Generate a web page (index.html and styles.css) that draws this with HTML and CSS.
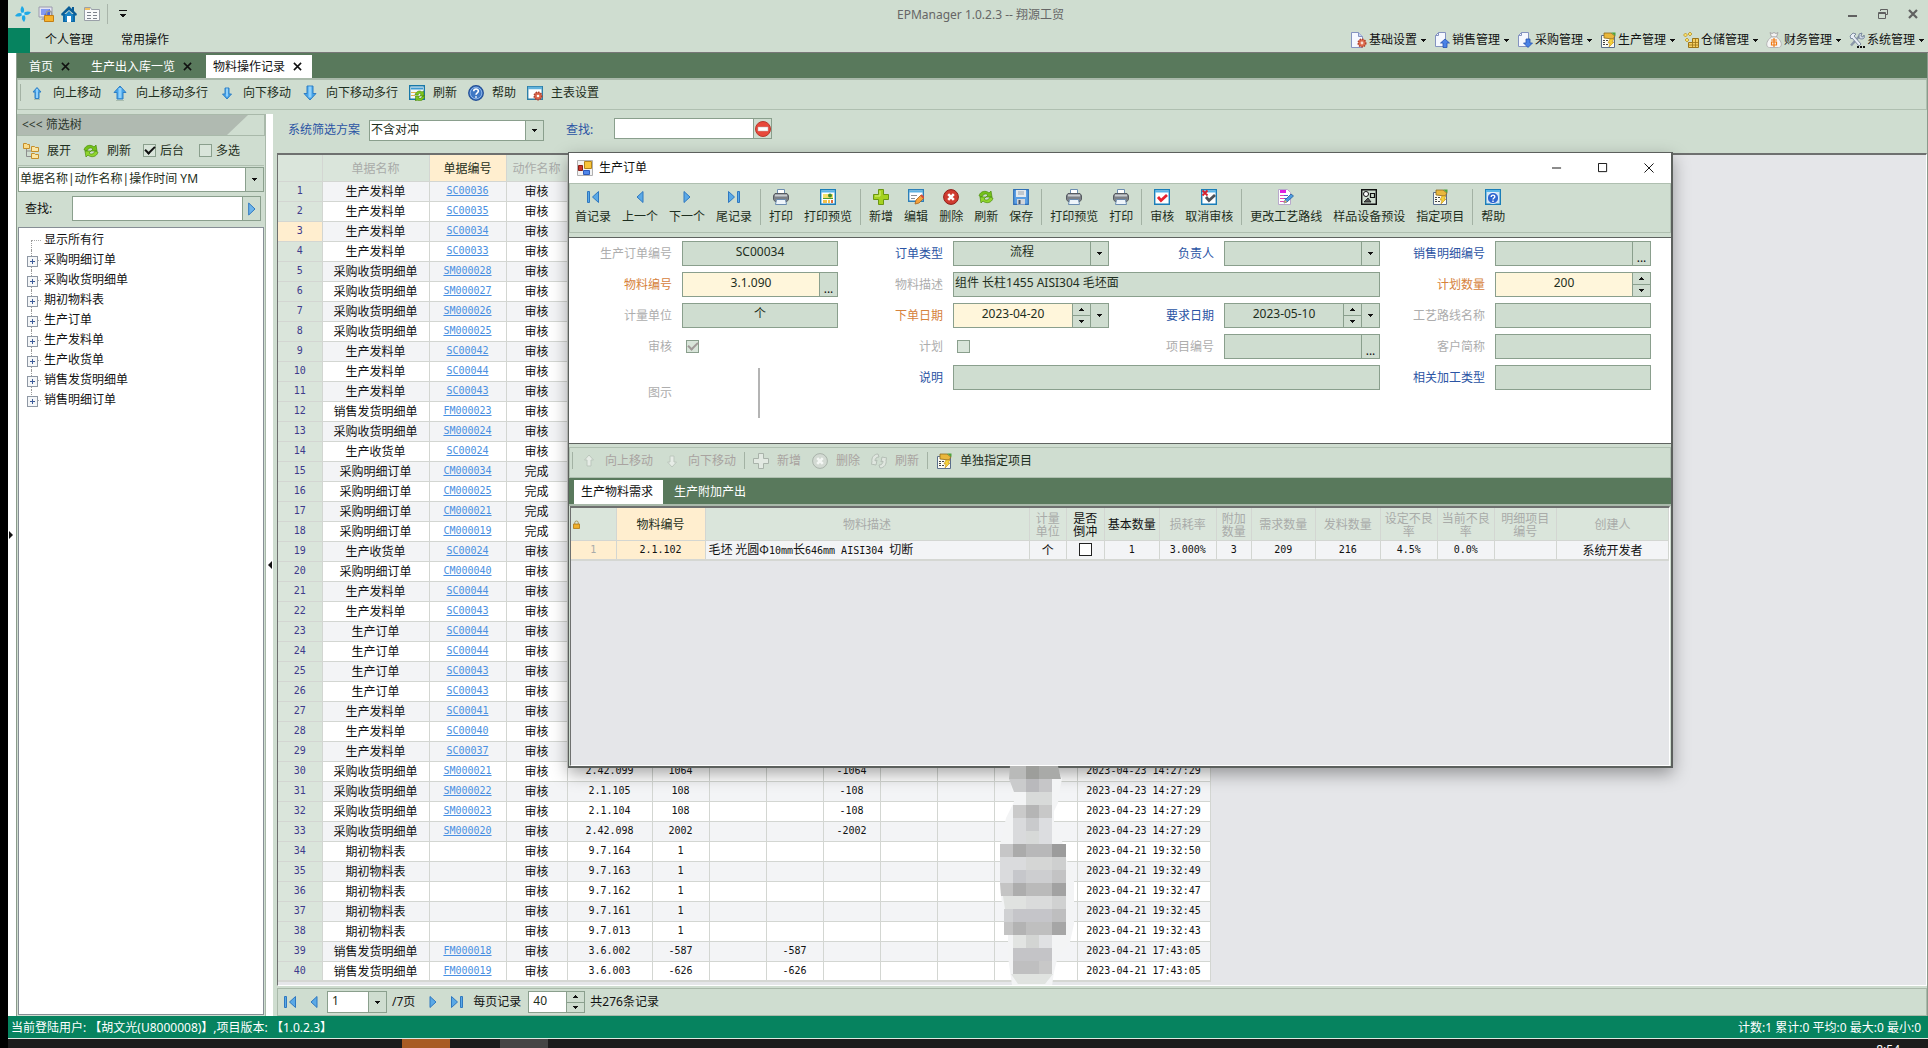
FILE: index.html
```html
<!DOCTYPE html>
<html lang="zh-CN">
<head>
  <meta charset="UTF-8">
  <meta name="viewport" content="width=device-width, initial-scale=1.0">
  <title>EPManager 1.0.2.3 -- 翔源工贸</title>
  <link rel="stylesheet" href="styles.css">
</head>
<body>
  <!-- icon sprite -->
  <svg class="sprite" aria-hidden="true">
    <symbol id="i-drop" viewBox="0 0 7 7"><path d="M1 2h5v1h-1v1h-1v1h-1v-1h-1v-1h-1z" fill="currentColor"/></symbol>
    <symbol id="i-upTri" viewBox="0 0 7 7"><path d="M1 5h5v-1h-1v-1h-1v-1h-1v1h-1v1h-1z" fill="currentColor"/></symbol>
    <symbol id="i-x" viewBox="0 0 10 10"><path d="M1 1l8 8M9 1l-8 8" stroke="currentColor" stroke-width="1.7"/></symbol>
    <symbol id="i-app" viewBox="0 0 16 16"><g fill="#1fa9e6"><path d="M8 8C5 6 5 3 7 0c2 2 3 4 1 8z"/><path d="M8 8c2-3 5-3 8-2-2 3-4 4-8 2z"/><path d="M8 8c3 2 3 5 1 8-2-2-3-4-1-8z"/><path d="M8 8c-2 3-5 3-8 2 2-3 4-4 8-2z"/></g><circle cx="8" cy="8" r="1.5" fill="#bff0ff"/></symbol>
    <symbol id="i-lock" viewBox="0 0 16 16"><path d="M1 1h13v10H1z" fill="#e4e4f2" stroke="#9a9aac"/><path d="M3 3h9v6H3z" fill="#4a65dd"/><path d="M3 3h9l-6 6H3z" fill="#8299f2"/><path d="M3 14l2-3h3v3z" fill="#a9a9b4"/><path d="M8.500 9V7.500a2.500 2.500 0 0 1 5 0V9" fill="none" stroke="#999" stroke-width="1.500"/><path d="M6.500 9.500h9v6h-9z" fill="#f6b32c" stroke="#c47f14"/></symbol>
    <symbol id="i-home" viewBox="0 0 16 16"><path d="M2 8h12v8H2z" fill="#0d6aa8"/><path d="M8 0L0 8l1 2 7-6 7 6 1-2-3-3V1h-2v2z" fill="#0a5d97"/><path d="M8 5l4 4v6H4V9z" fill="#1b84c6"/><path d="M6 10h4v6H6z" fill="#fff"/></symbol>
    <symbol id="i-form" viewBox="0 0 16 16"><path d="M.5 1.500h6l1 2h8v11H.5z" fill="#f8f9fb" stroke="#9aa0a8"/><path d="M1 2h5v2H1z" fill="#f2c162"/><path d="M3 6.500h4M9 6.500h4M3 9.500h4M9 9.500h4M3 12.500h4M9 12.500h4" stroke="#7c828c"/></symbol>
    <symbol id="i-up" viewBox="0 0 16 16"><path d="M8 2.500l4 4.500H10v6.500H6V7H4z" fill="#45a3ea" stroke="#2f7fc4"/><path d="M8 4v9" stroke="#8fd0fb" stroke-width="2"/><path d="M5 14.500h6" stroke="#a9bcae"/></symbol>
    <symbol id="i-upBig" viewBox="0 0 16 16"><path d="M8 1l6 6.500H11V14H5V7.500H2z" fill="#45a3ea" stroke="#2f7fc4"/><path d="M8 3v10" stroke="#8fd0fb" stroke-width="3"/><path d="M4 15.500h8" stroke="#a9bcae"/></symbol>
    <symbol id="i-down" viewBox="0 0 16 16"><path d="M8 14l4.500-5H10V3H6v6H3.500z" fill="#45a3ea" stroke="#2f7fc4"/><path d="M8 3.500v8" stroke="#8fd0fb" stroke-width="2"/></symbol>
    <symbol id="i-downBig" viewBox="0 0 16 16"><path d="M8 15l6-6.500H11V1H5v7.500H2z" fill="#45a3ea" stroke="#2f7fc4"/><path d="M8 1.500v11" stroke="#8fd0fb" stroke-width="3"/></symbol>
    <symbol id="i-arrows" viewBox="0 0 16 16"><path d="M1 7c1-5 7-6 10-3l2-2 1 6H8l2-2C8 4 5 5 4 8z" fill="#74c11a" stroke="#4a8c0c" stroke-width=".7"/><path d="M15 9c-1 5-7 6-10 3l-2 2-1-6h6l-2 2c2 2 5 1 6-2z" fill="#8fd52c" stroke="#4a8c0c" stroke-width=".7"/></symbol>
    <symbol id="i-tableRefresh" viewBox="0 0 16 16"><path d="M.7.7h14.600v13.600H.7z" fill="#f4f8fa" stroke="#1878a8" stroke-width="1.400"/><path d="M2 3.500h12" stroke="#3f9ad0" stroke-width="2"/><path d="M2 7.500h5M2 10.500h4" stroke="#e2b34c"/><path d="M6 10c1-4 5-5 7-3l1.500-1 .5 5h-4l1-2c-1-1-2-1-3 1zM16 11c-1 4-5 6-8 4l-1.500 1V11h4l-1 2c2 1 3 0 4-2z" fill="#7fc61c" stroke="#3f800c" stroke-width=".6"/></symbol>
    <symbol id="i-help" viewBox="0 0 16 16"><circle cx="8" cy="8" r="7.300" fill="#3f78c4" stroke="#234f96" stroke-width="1.200"/><circle cx="8" cy="8" r="5.800" fill="none" stroke="#9dc0ee" stroke-width=".8"/><path d="M5.700 6.300c0-3 4.800-3 4.700-.2C10.400 8 8 7.800 8 9.800M8 11.200v1.600" fill="none" stroke="#fff" stroke-width="1.600"/></symbol>
    <symbol id="i-tableGear" viewBox="0 0 16 16"><path d="M.7 1.700h14.600v12.600H.7z" fill="#fff" stroke="#2d7fa8" stroke-width="1.400"/><path d="M1 3h14" stroke="#62b2dc" stroke-width="2.500"/><circle cx="11" cy="11" r="3.800" fill="#d9644a" stroke="#b0402c" stroke-width="1.500" stroke-dasharray="1.500 1"/><circle cx="11" cy="11" r="1.300" fill="#fff"/></symbol>
    <symbol id="i-tree" viewBox="0 0 16 16"><path d="M3.500 6v7.500H9M3.500 8H9" fill="none" stroke="#8d8d8d"/><path d="M.5.500h3l1 1h2v4h-6z" fill="#fbdd8a" stroke="#c58e2a"/><path d="M8.500 3.500h3l1 1h3v4h-7zM8.500 10.500h3l1 1h3v4h-7z" fill="#fbe6a4" stroke="#c58e2a"/></symbol>
    <symbol id="i-play" viewBox="0 0 8 14"><path d="M.7 1v12l6.300-6z" fill="#6eb4ea" stroke="#2f78c0"/></symbol>
    <symbol id="i-stop" viewBox="0 0 16 16"><circle cx="8" cy="8" r="7.500" fill="#e8483a" stroke="#b8382c"/><path d="M3 6h10v4H3z" fill="#fff" stroke="#b8b0b0" stroke-width=".5"/></symbol>
    <symbol id="i-first" viewBox="0 0 16 16"><path d="M2.500 2.500h2v11h-2zM13.500 2.500v11L7.500 8z" fill="#5ba9e6" stroke="#2f78c0"/></symbol>
    <symbol id="i-prev" viewBox="0 0 16 16"><path d="M11 2.500v11L5 8z" fill="#5ba9e6" stroke="#2f78c0"/></symbol>
    <symbol id="i-next" viewBox="0 0 16 16"><path d="M5 2.500v11L11 8z" fill="#5ba9e6" stroke="#2f78c0"/></symbol>
    <symbol id="i-last" viewBox="0 0 16 16"><path d="M11.500 2.500h2v11h-2zM2.500 2.500v11l6-5.500z" fill="#5ba9e6" stroke="#2f78c0"/></symbol>
    <symbol id="i-print" viewBox="0 0 16 16"><path d="M4.500.5h7v5h-7z" fill="#fff" stroke="#6b8cb0"/><path d="M2 4.500h12l1.500 2v4l-1.500 2H2l-1.500-2v-4z" fill="#7c8086" stroke="#565a60"/><path d="M2 6.500h12" stroke="#c8ccd0" stroke-width="2"/><path d="M3.500 10.500h9l1 5h-11z" fill="#eef4fa" stroke="#6b8cb0"/></symbol>
    <symbol id="i-preview" viewBox="0 0 16 16"><path d="M.7.7h14.600v14.600H.7z" fill="#fff" stroke="#1a7db8" stroke-width="1.400"/><path d="M1 2.500h14" stroke="#58b4e8" stroke-width="2"/><path d="M3 5h10v4H3z" fill="#f3e06a"/><circle cx="10" cy="6.500" r="2" fill="#3c8a34"/><path d="M3 9.500h10" stroke="#4f9a34"/><path d="M3 11h4v3H3zM8 11h2v3H8z" fill="#f3c04a"/><path d="M11 11h2v3h-2z" fill="#e06d3a"/></symbol>
    <symbol id="i-plus" viewBox="0 0 16 16"><path d="M5.500.5h5v5h5v5h-5v5h-5v-5h-5v-5h5z" fill="#a4d21f" stroke="#6a9612"/><path d="M7 2v5H2" fill="none" stroke="#d8f07c"/></symbol>
    <symbol id="i-edit" viewBox="0 0 16 16"><path d="M.7.7h14.600v11.600H.7z" fill="#fff" stroke="#2d7fb8" stroke-width="1.400"/><path d="M1 2.500h14" stroke="#5cb2e2" stroke-width="2"/><path d="M3 6.500h6M3 9.500h4" stroke="#8a8f96"/><path d="M7 15l1-4 5-5 3 3-5 5z" fill="#f5a33c" stroke="#a8621a" stroke-width=".8"/><path d="M13 6l3 3" stroke="#d24b3c" stroke-width="2"/></symbol>
    <symbol id="i-del" viewBox="0 0 16 16"><circle cx="8" cy="8" r="7.400" fill="#cf3b30" stroke="#8f1f1a"/><path d="M5.200 5.200l5.600 5.600M10.800 5.200l-5.600 5.600" stroke="#fff" stroke-width="2.600"/></symbol>
    <symbol id="i-save" viewBox="0 0 16 16"><path d="M.7.7h14.600v14.600H.7z" fill="#5b9fe4" stroke="#2f6db4" stroke-width="1.200"/><path d="M3 1h10v7H3z" fill="#e6eaee"/><path d="M5 3h6M5 5h6" stroke="#9aa4ae"/><path d="M4 10h8v5.500H4z" fill="#d3d7dc"/><path d="M5.500 11h2v4h-2z" fill="#4c5664"/></symbol>
    <symbol id="i-check" viewBox="0 0 16 16"><path d="M.7.7h14.600v14.600H.7z" fill="#fff" stroke="#1a7db8" stroke-width="1.400"/><path d="M1 2.500h14" stroke="#58b4e8" stroke-width="2"/><path d="M4 8l3 3.500L13 6" fill="none" stroke="#e8222e" stroke-width="2.800"/></symbol>
    <symbol id="i-uncheck" viewBox="0 0 16 16"><path d="M.7.7h14.600v14.600H.7z" fill="#fff" stroke="#1a7db8" stroke-width="1.400"/><path d="M1 2.500h14" stroke="#58b4e8" stroke-width="2"/><path d="M5 8l3 3.500L14 6" fill="none" stroke="#4e5258" stroke-width="2.800"/><path d="M1.500 1.500l5 5M6.500 1.500l-5 5" stroke="#d8202c" stroke-width="1.800"/></symbol>
    <symbol id="i-route" viewBox="0 0 16 16"><path d="M.5.5h9l3 3v12H.5z" fill="#fff" stroke="#b9a9cc"/><path d="M2 2.500h6" stroke="#e020e0" stroke-width="3"/><path d="M2 6.500h4M2 9.500h4M2 12.500h4" stroke="#e04ab0"/><path d="M6 6.500h4M6 9.500h3" stroke="#4a6bd0"/><path d="M6 14l1-3 6-6 2.500 2-6.500 6z" fill="#4b9be0" stroke="#2a5f9c" stroke-width=".8"/><path d="M6 14l1-3 2 2z" fill="#f1b560"/></symbol>
    <symbol id="i-device" viewBox="0 0 16 16"><path d="M.7.7h14.600v14.600H.7z" fill="none" stroke="#111" stroke-width="1.400"/><circle cx="5" cy="5" r="2.500" fill="#fff" stroke="#111"/><path d="M9.500 4.500h4v4h-4z" fill="none" stroke="#111" stroke-width="1.200"/><path d="M3 13l4-4 3 4z" fill="#555" stroke="#111" stroke-width=".8"/></symbol>
    <symbol id="i-assign" viewBox="0 0 16 16"><path d="M1.500 3.500h13v12h-13z" fill="#fbfbf4" stroke="#5b6f8c"/><path d="M4 1h7l4 3-2 3-9-1z" fill="#e9b73c" stroke="#8d6a1e" stroke-width=".8"/><path d="M11 .5h4.500V4z" fill="#4fa43a"/><path d="M3 8.500h2M3 10.500h2M3 12.500h2M6 8.500h2M6 12.500h2" stroke="#444"/><path d="M10 7l4 0-2 3h2l-5 5 1-4H8z" fill="#f6d33a" stroke="#c08c14" stroke-width=".6"/></symbol>
    <symbol id="i-helpBox" viewBox="0 0 16 16"><path d="M.7.7h14.600v14.600H.7z" fill="#cfe6f6" stroke="#1a7db8" stroke-width="1.400"/><path d="M1 2h14" stroke="#58b4e8" stroke-width="2"/><circle cx="8" cy="9" r="5.600" fill="#2f66d0" stroke="#fff" stroke-width=".8"/><path d="M6.200 8c0-2.600 3.700-2.400 3.600-.2C9.800 9 8 9 8 10.500M8 11.500v1.400" fill="none" stroke="#fff" stroke-width="1.400"/></symbol>
    <symbol id="i-setting" viewBox="0 0 16 16"><path d="M.5.5h7l4 4v11H.5z" fill="#f5f8ff" stroke="#8493c0"/><path d="M7.500.5v4h4" fill="#c4d0ee" stroke="#8493c0"/><circle cx="11" cy="11" r="3.800" fill="#dd6a4c" stroke="#b0402c" stroke-width="1.500" stroke-dasharray="1.500 1"/><circle cx="11" cy="11" r="1.400" fill="#f7dcd4"/></symbol>
    <symbol id="i-sale" viewBox="0 0 16 16"><path d="M4.500.5h7v14H1.500v-11z" fill="#f5f8ff" stroke="#8493c0"/><path d="M4.500.5v3h-3" fill="none" stroke="#8493c0"/><path d="M11 7l4.500 4H13v4.500H9V11H6.500z" fill="#4a82e6" stroke="#2450b0" stroke-width=".8"/></symbol>
    <symbol id="i-buy" viewBox="0 0 16 16"><path d="M4.500.5h7v14H1.500v-11z" fill="#f5f8ff" stroke="#8493c0"/><path d="M4.500.5v3h-3" fill="none" stroke="#8493c0"/><path d="M11 15.500l4.500-4.500H13V7H9v4H6.500z" fill="#4a82e6" stroke="#2450b0" stroke-width=".8"/></symbol>
    <symbol id="i-store" viewBox="0 0 16 16"><path d="M2.500 1l2 2-2 2-2-2zM7 0l2 2-2 2-2-2zM4 6l2 2-2 2-2-2z" fill="#fbe06a" stroke="#b08a1c" stroke-width=".7"/><path d="M9.500 6.500h6v9h-10v-5h4z" fill="#f6cf62" stroke="#9a7418"/><path d="M9.500 10.500h6M12.500 6.500v9M9.500 10.500v5M6 13h9" fill="none" stroke="#9a7418" stroke-width=".8"/></symbol>
    <symbol id="i-money" viewBox="0 0 16 16"><path d="M4 .5l2 1 2-1 2 1 2-1L10.500 5h-5z" fill="#f3f3f3" stroke="#a8a8a8"/><path d="M5.500 5h5c6 4 6 10.500 2 10.500h-9C-.5 15.500-.5 9 5.500 5z" fill="#f6f6f6" stroke="#b4b4b4"/><path d="M8 6v9M5 8h6M5.500 10h5v3h-5z" fill="none" stroke="#f07a14" stroke-width="1.200"/></symbol>
    <symbol id="i-tools" viewBox="0 0 16 16"><path d="M2 13.500l9-10" stroke="#8a97a8" stroke-width="2.500"/><path d="M1 4l3-3 3 1-2 2 7 8-2 2-7-8-1 1z" fill="#e8eef6" stroke="#6a7890" stroke-width=".8"/><path d="M10 2l3-1-1 3 2 1 1-2c2 4-3 5-5 3z" fill="#cfd9e6" stroke="#6a7890" stroke-width=".8"/><path d="M8 15h2M11 15h2M14 15h2" stroke="#111" stroke-width="2"/></symbol>
    <symbol id="i-win" viewBox="0 0 16 16"><path d="M.5.5h15v15H.5z" fill="#f2f2f2" stroke="#b0b0b0"/><path d="M7.500 1.500h7v7h-7z" fill="#f8c53a" stroke="#b4841a"/><path d="M1.500 5.500h4v5h-4z" fill="#c9352a" stroke="#8a1d18"/><path d="M6.500 10.500h6v4h-6z" fill="#4f86ea" stroke="#2c5ab8"/></symbol>
    <symbol id="i-padlock" viewBox="0 0 8 10"><path d="M2 5V3a2 2 0 0 1 4 0v2" fill="none" stroke="#a08a4a"/><path d="M.5 4.500h7v5h-7z" fill="#f0b02c" stroke="#b27a12"/></symbol>
    <symbol id="i-gUp" viewBox="0 0 16 16"><path d="M8 2l4.500 5H10v6H6V7H3.500z" fill="#e6ece6" stroke="#bcc7bd"/></symbol>
    <symbol id="i-gDown" viewBox="0 0 16 16"><path d="M8 14l4.500-5H10V3H6v6H3.500z" fill="#e6ece6" stroke="#bcc7bd"/></symbol>
    <symbol id="i-gPlus" viewBox="0 0 16 16"><path d="M5.500.5h5v5h5v5h-5v5h-5v-5h-5v-5h5z" fill="#e2e9e2" stroke="#a9b3aa"/></symbol>
    <symbol id="i-gDel" viewBox="0 0 16 16"><circle cx="8" cy="8" r="7.400" fill="#d3dad3" stroke="#a9b3aa"/><path d="M5.200 5.200l5.600 5.600M10.800 5.200l-5.600 5.600" stroke="#f4f7f4" stroke-width="2.600"/></symbol>
    <symbol id="i-gArrows" viewBox="0 0 16 16"><path d="M7 1C3 1 0 5 1 9l-1 2 5 1 1-5-2 1c0-2 1-4 4-4zM9 15c4 0 7-4 6-8l1-2-5-1-1 5 2-1c0 2-1 4-4 4z" fill="#dfe6df" stroke="#b0bab1" stroke-width=".9"/></symbol>
  </svg>

  <div class="screen">
    <header class="titlebar">
      <div class="quick">
        <svg class="ico"><use href="#i-app"/></svg>
        <button type="button" aria-label="锁定"><svg class="ico"><use href="#i-lock"/></svg></button>
        <button type="button" aria-label="首页"><svg class="ico"><use href="#i-home"/></svg></button>
        <button type="button" aria-label="窗口"><svg class="ico"><use href="#i-form"/></svg></button>
        <span class="quick-sep"></span>
        <button type="button" aria-label="更多"><svg class="more" viewBox="0 0 8 8"><path d="M0 0h8v1H0zM1 4h6v1h-1v1h-1v1h-2v-1h-1v-1h-1z" fill="#111"/></svg></button>
      </div>
      <h1>EPManager 1.0.2.3 -- 翔源工贸</h1>
      <div class="win-ctl">
        <button type="button" aria-label="最小化"><svg viewBox="0 0 10 10"><path d="M0 6h9v2H0z" fill="#606060"/></svg></button>
        <button type="button" aria-label="还原"><svg viewBox="0 0 10 10"><path d="M2.500 2V.5h7v5H8M.5 3.500h7v6h-7zM.5 4.500h7" fill="none" stroke="#606060"/></svg></button>
        <button type="button" aria-label="关闭"><svg viewBox="0 0 10 10"><path d="M1 1l8 8M9 1l-8 8" stroke="#606060" stroke-width="2.200"/></svg></button>
      </div>
    </header>

    <nav class="menubar">
      <span class="file-btn"></span>
      <a href="#">个人管理</a>
      <a href="#">常用操作</a>
      <div class="modules">
        <button type="button"><svg class="ico"><use href="#i-setting"/></svg>基础设置<svg class="tri"><use href="#i-drop"/></svg></button>
        <button type="button"><svg class="ico"><use href="#i-sale"/></svg>销售管理<svg class="tri"><use href="#i-drop"/></svg></button>
        <button type="button"><svg class="ico"><use href="#i-buy"/></svg>采购管理<svg class="tri"><use href="#i-drop"/></svg></button>
        <button type="button"><svg class="ico"><use href="#i-assign"/></svg>生产管理<svg class="tri"><use href="#i-drop"/></svg></button>
        <button type="button"><svg class="ico"><use href="#i-store"/></svg>仓储管理<svg class="tri"><use href="#i-drop"/></svg></button>
        <button type="button"><svg class="ico"><use href="#i-money"/></svg>财务管理<svg class="tri"><use href="#i-drop"/></svg></button>
        <button type="button"><svg class="ico"><use href="#i-tools"/></svg>系统管理<svg class="tri"><use href="#i-drop"/></svg></button>
      </div>
    </nav>

    <div class="shell">
      <div class="edge"><span class="fold fold-right"></span></div>
      <main class="workspace">
        <div class="tabs">
          <button type="button" class="tab">首页<svg class="x"><use href="#i-x"/></svg></button>
          <button type="button" class="tab">生产出入库一览<svg class="x"><use href="#i-x"/></svg></button>
          <button type="button" class="tab active">物料操作记录<svg class="x"><use href="#i-x"/></svg></button>
        </div>
        <div class="toolbar main-toolbar">
          <span class="sep"></span>
          <button type="button"><svg class="ico"><use href="#i-up"/></svg>向上移动</button>
          <button type="button"><svg class="ico"><use href="#i-upBig"/></svg>向上移动多行</button>
          <button type="button"><svg class="ico"><use href="#i-down"/></svg>向下移动</button>
          <button type="button"><svg class="ico"><use href="#i-downBig"/></svg>向下移动多行</button>
          <button type="button"><svg class="ico"><use href="#i-tableRefresh"/></svg>刷新</button>
          <button type="button"><svg class="ico"><use href="#i-help"/></svg>帮助</button>
          <button type="button"><svg class="ico"><use href="#i-tableGear"/></svg>主表设置</button>
        </div>

        <div class="panes">
          <aside class="filter">
            <div class="filter-head"><span>&lt;&lt;&lt; 筛选树</span></div>
            <div class="filter-tools">
              <button type="button"><svg class="ico"><use href="#i-tree"/></svg>展开</button>
              <button type="button"><svg class="ico"><use href="#i-arrows"/></svg>刷新</button>
              <label><input type="checkbox" class="tick" checked>后台</label>
              <label><input type="checkbox" class="tick">多选</label>
            </div>
            <div class="field group-by">
              <select aria-label="分组"><option>单据名称|动作名称|操作时间 YM</option></select>
              <span class="part"><svg class="tri"><use href="#i-drop"/></svg></span>
            </div>
            <div class="filter-find">
              <label for="treeFind">查找:</label>
              <div class="field">
                <input type="text" id="treeFind">
                <button type="button" class="part" aria-label="下一个"><svg class="play"><use href="#i-play"/></svg></button>
              </div>
            </div>
            <ul class="tree">
              <li class="leaf">显示所有行</li>
              <li>采购明细订单</li>
              <li>采购收货明细单</li>
              <li>期初物料表</li>
              <li>生产订单</li>
              <li>生产发料单</li>
              <li>生产收货单</li>
              <li>销售发货明细单</li>
              <li>销售明细订单</li>
            </ul>
          </aside>
          <div class="splitter"><span class="fold fold-left"></span></div>

          <section class="records">
            <div class="scheme">
              <label for="scheme">系统筛选方案</label>
              <div class="field scheme-field">
                <select id="scheme"><option>不含对冲</option></select>
                <span class="part"><svg class="tri"><use href="#i-drop"/></svg></span>
              </div>
              <label for="find" class="find-label">查找:</label>
              <div class="field find-field">
                <input type="text" id="find">
                <button type="button" class="part" aria-label="清除"><svg class="ico"><use href="#i-stop"/></svg></button>
              </div>
            </div>
            <div class="grid-box">
              <table class="grid">
                <colgroup>
                  <col class="w44"><col class="w107"><col class="w77"><col class="w61"><col class="w85">
                  <col class="w57"><col class="w57"><col class="w57"><col class="w57"><col class="w57"><col class="w57">
                  <col class="w83"><col class="w133">
                </colgroup>
                <thead>
                  <tr><th></th><th>单据名称</th><th class="key">单据编号</th><th>动作名称</th><th></th><th></th><th></th><th></th><th></th><th></th><th></th><th></th><th></th></tr>
                </thead>
                <tbody id="rows"></tbody>
              </table>
              <!-- masked operator names -->
              <svg class="mask" viewBox="0 0 76 220" aria-hidden="true">
                <path d="M14 1h42l6 13-3 14-1 10-4 8v16l8 14 4 18 8 15v50l-4 18-12 14-4 16-2 14-6 13H16l-4-14-4-28V160L2 140 0 118V80l6-27 8-16-4-22z" fill="#f3f4f5"/>
                <path d="M10 1h16v13H9z" fill="#b9bab9"/><path d="M26 1h13v13H26z" fill="#9d9e9b"/><path d="M39 1h19l3 13H39z" fill="#a9aaa8"/>
                <path d="M9 14h17v13H14z" fill="#cacbcc"/><path d="M26 14h13v13H26z" fill="#b9b9bc"/><path d="M39 14h13v13H39z" fill="#c6c6c8"/>
                <path d="M26 27h26v13H26z" fill="#d8dad9"/><path d="M13 40h13v13H13z" fill="#cacaca"/><path d="M26 40h13v13H26z" fill="#b5b5b5"/><path d="M39 40h13v13H39z" fill="#c8c8c8"/>
                <path d="M13 53h13v26H13z" fill="#d9dadc"/><path d="M26 53h13v13H26z" fill="#c9cacc"/><path d="M39 53h13v26H39z" fill="#dcdde0"/><path d="M26 66h13v13H26z" fill="#d7d9d8"/>
                <path d="M0 79h13v13H0z" fill="#c6c6c7"/><path d="M13 79h13v13H13z" fill="#ababab"/><path d="M26 79h26v13H26z" fill="#b8b8b9"/><path d="M52 79h14v13H52z" fill="#9c9c9c"/>
                <path d="M0 92h26v26H0z" fill="#dadbdd"/><path d="M26 92h26v13H26z" fill="#d5d6d5"/><path d="M52 92h14v13H52z" fill="#cecfcf"/>
                <path d="M13 105h13v13H13z" fill="#c6c7cb"/><path d="M26 105h26v13H26z" fill="#cdced0"/><path d="M52 105h14v13H52z" fill="#c3c3c4"/>
                <path d="M0 118h13v13H1z" fill="#c4c4c4"/><path d="M13 118h13v13H13z" fill="#adadad"/><path d="M26 118h26v13H26z" fill="#bababa"/><path d="M52 118h14v13H52z" fill="#a2a2a2"/>
                <path d="M3 131h23v13H5z" fill="#e0e2e0"/><path d="M26 131h26v13H26z" fill="#dadbdb"/><path d="M52 131h14v13H52z" fill="#d0d1d1"/>
                <path d="M4 144h9v13H4z" fill="#d0d1d3"/><path d="M13 144h39v13H13z" fill="#c5c5c9"/><path d="M52 144h14v13H52z" fill="#bebebf"/>
                <path d="M4 157h9v13H4z" fill="#c4c4c4"/><path d="M13 157h13v13H13z" fill="#b3b3b3"/><path d="M26 157h26v13H26z" fill="#bfbfbf"/><path d="M52 157h14v13H52z" fill="#a6a6a6"/>
                <path d="M13 170h13v13H13z" fill="#e2e4e2"/><path d="M26 170h13v13H26z" fill="#d3d5d3"/><path d="M39 170h13v13H39z" fill="#e0e1e3"/>
                <path d="M13 183h39v13H13z" fill="#c4c4c7"/><path d="M13 196h26v13H13z" fill="#bfbfc0"/><path d="M39 196h13v13H39z" fill="#c8c8c8"/><path d="M11 209h42l-8 10H18z" fill="#e0e3e0"/>
              </svg>
            </div>
            <div class="pager">
              <button type="button" aria-label="首页"><svg class="ico"><use href="#i-first"/></svg></button>
              <button type="button" aria-label="上一页"><svg class="ico"><use href="#i-prev"/></svg></button>
              <div class="field page-field">
                <select aria-label="页码"><option>1</option></select>
                <span class="part"><svg class="tri"><use href="#i-drop"/></svg></span>
              </div>
              <span class="pages">/7页</span>
              <button type="button" aria-label="下一页"><svg class="ico"><use href="#i-next"/></svg></button>
              <button type="button" aria-label="末页"><svg class="ico"><use href="#i-last"/></svg></button>
              <label for="pageSize">每页记录</label>
              <div class="field size-field">
                <input type="text" id="pageSize" value="40">
                <span class="spin"><button type="button" aria-label="加"><svg class="tri"><use href="#i-upTri"/></svg></button><button type="button" aria-label="减"><svg class="tri"><use href="#i-drop"/></svg></button></span>
              </div>
              <span class="total">共276条记录</span>
            </div>
          </section>
        </div>
      </main>
    </div>

    <footer class="status">
      <span>当前登陆用户: 【胡文光(U8000008)】,项目版本: 【1.0.2.3】</span>
      <span>计数:1 累计:0 平均:0 最大:0 最小:0</span>
    </footer>
    <div class="taskbar"><span class="task task-hot"></span><span class="task"></span><span class="clock">8:54</span></div>
  </div>

  <!-- order window -->
  <section class="dialog" role="dialog" aria-labelledby="dlgTitle">
    <div class="dlg-title">
      <svg class="ico"><use href="#i-win"/></svg>
      <h2 id="dlgTitle">生产订单</h2>
      <div class="dlg-ctl">
        <button type="button" aria-label="最小化"><svg viewBox="0 0 11 11"><path d="M0 5.500h10" stroke="#000"/></svg></button>
        <button type="button" aria-label="最大化"><svg viewBox="0 0 11 11"><path d="M.5.500h9v9h-9z" fill="none" stroke="#000"/></svg></button>
        <button type="button" aria-label="关闭"><svg viewBox="0 0 11 11"><path d="M.5.500l10 10M10.500.500l-10 10" stroke="#000"/></svg></button>
      </div>
    </div>
    <div class="ribbon">
      <button type="button"><svg class="ico"><use href="#i-first"/></svg>首记录</button>
      <button type="button"><svg class="ico"><use href="#i-prev"/></svg>上一个</button>
      <button type="button"><svg class="ico"><use href="#i-next"/></svg>下一个</button>
      <button type="button"><svg class="ico"><use href="#i-last"/></svg>尾记录</button>
      <span class="bar"></span>
      <button type="button"><svg class="ico"><use href="#i-print"/></svg>打印</button>
      <button type="button"><svg class="ico"><use href="#i-preview"/></svg>打印预览</button>
      <span class="bar"></span>
      <button type="button"><svg class="ico"><use href="#i-plus"/></svg>新增</button>
      <button type="button"><svg class="ico"><use href="#i-edit"/></svg>编辑</button>
      <button type="button"><svg class="ico"><use href="#i-del"/></svg>删除</button>
      <button type="button"><svg class="ico"><use href="#i-arrows"/></svg>刷新</button>
      <button type="button"><svg class="ico"><use href="#i-save"/></svg>保存</button>
      <span class="bar"></span>
      <button type="button"><svg class="ico"><use href="#i-print"/></svg>打印预览</button>
      <button type="button"><svg class="ico"><use href="#i-print"/></svg>打印</button>
      <span class="bar"></span>
      <button type="button"><svg class="ico"><use href="#i-check"/></svg>审核</button>
      <button type="button"><svg class="ico"><use href="#i-uncheck"/></svg>取消审核</button>
      <span class="bar"></span>
      <button type="button"><svg class="ico"><use href="#i-route"/></svg>更改工艺路线</button>
      <button type="button"><svg class="ico"><use href="#i-device"/></svg>样品设备预设</button>
      <button type="button"><svg class="ico"><use href="#i-assign"/></svg>指定项目</button>
      <span class="bar"></span>
      <button type="button"><svg class="ico"><use href="#i-helpBox"/></svg>帮助</button>
    </div>

    <form class="order">
      <label for="orderNo" class="off">生产订单编号</label>
      <div class="field"><input type="text" id="orderNo" value="SC00034" readonly></div>
      <label for="orderType">订单类型</label>
      <div class="field"><select id="orderType"><option>流程</option></select><span class="part"><svg class="tri"><use href="#i-drop"/></svg></span></div>
      <label for="owner">负责人</label>
      <div class="field"><select id="owner"><option></option></select><span class="part"><svg class="tri"><use href="#i-drop"/></svg></span></div>
      <label for="saleNo">销售明细编号</label>
      <div class="field"><input type="text" id="saleNo"><button type="button" class="part dots">...</button></div>

      <label for="itemNo" class="must">物料编号</label>
      <div class="field need"><input type="text" id="itemNo" value="3.1.090"><button type="button" class="part dots">...</button></div>
      <label for="itemDesc" class="off">物料描述</label>
      <div class="field wide"><input type="text" id="itemDesc" value="组件 长柱1455 AISI304 毛坯面" readonly></div>
      <label for="qty" class="must">计划数量</label>
      <div class="field need"><input type="text" id="qty" value="200"><span class="spin"><button type="button" aria-label="加"><svg class="tri"><use href="#i-upTri"/></svg></button><button type="button" aria-label="减"><svg class="tri"><use href="#i-drop"/></svg></button></span></div>

      <label for="unit" class="off">计量单位</label>
      <div class="field"><input type="text" id="unit" value="个" readonly></div>
      <label for="orderDate" class="must">下单日期</label>
      <div class="field need"><input type="text" id="orderDate" value="2023-04-20"><span class="spin"><button type="button" aria-label="加"><svg class="tri"><use href="#i-upTri"/></svg></button><button type="button" aria-label="减"><svg class="tri"><use href="#i-drop"/></svg></button></span><button type="button" class="part" aria-label="日历"><svg class="tri"><use href="#i-drop"/></svg></button></div>
      <label for="dueDate">要求日期</label>
      <div class="field"><input type="text" id="dueDate" value="2023-05-10"><span class="spin"><button type="button" aria-label="加"><svg class="tri"><use href="#i-upTri"/></svg></button><button type="button" aria-label="减"><svg class="tri"><use href="#i-drop"/></svg></button></span><button type="button" class="part" aria-label="日历"><svg class="tri"><use href="#i-drop"/></svg></button></div>
      <label for="route" class="off">工艺路线名称</label>
      <div class="field"><input type="text" id="route" readonly></div>

      <label for="audit" class="off">审核</label>
      <div class="tick-cell"><input type="checkbox" id="audit" class="tick" checked disabled></div>
      <label for="plan" class="off">计划</label>
      <div class="tick-cell"><input type="checkbox" id="plan" class="tick" disabled></div>
      <label for="project" class="off">项目编号</label>
      <div class="field"><input type="text" id="project"><button type="button" class="part dots">...</button></div>
      <label for="customer" class="off">客户简称</label>
      <div class="field"><input type="text" id="customer" readonly></div>

      <span class="off figure-label">图示</span>
      <div class="figure"></div>
      <label for="memo">说明</label>
      <div class="field wide"><input type="text" id="memo"></div>
      <label for="process">相关加工类型</label>
      <div class="field"><input type="text" id="process"></div>
    </form>

    <div class="toolbar sub-toolbar">
      <span class="sep"></span>
      <button type="button" disabled><svg class="ico"><use href="#i-gUp"/></svg>向上移动</button>
      <button type="button" disabled><svg class="ico"><use href="#i-gDown"/></svg>向下移动</button>
      <span class="sep"></span>
      <button type="button" disabled><svg class="ico"><use href="#i-gPlus"/></svg>新增</button>
      <button type="button" disabled><svg class="ico"><use href="#i-gDel"/></svg>删除</button>
      <button type="button" disabled><svg class="ico"><use href="#i-gArrows"/></svg>刷新</button>
      <span class="sep"></span>
      <button type="button"><svg class="ico"><use href="#i-assign"/></svg>单独指定项目</button>
    </div>
    <div class="tabs dlg-tabs">
      <button type="button" class="tab active">生产物料需求</button>
      <button type="button" class="tab">生产附加产出</button>
    </div>
    <div class="need-box">
      <table class="grid need-grid">
        <colgroup>
          <col class="w45"><col class="w89"><col class="w324"><col class="w37"><col class="w38"><col class="w55"><col class="w57">
          <col class="w35"><col class="w64"><col class="w65"><col class="w57"><col class="w57"><col class="w62"><col class="w112">
        </colgroup>
        <thead>
          <tr>
            <th class="lock-cell"><svg class="padlock"><use href="#i-padlock"/></svg></th>
            <th class="key">物料编号</th><th>物料描述</th><th>计量<br>单位</th><th class="on">是否<br>倒冲</th>
            <th class="on">基本数量</th><th>损耗率</th><th>附加<br>数量</th><th>需求数量</th><th>发料数量</th>
            <th>设定不良<br>率</th><th>当前不良<br>率</th><th>明细项目<br>编号</th><th>创建人</th>
          </tr>
        </thead>
        <tbody>
          <tr>
            <td class="hot no num">1</td><td class="hot num">2.1.102</td>
            <td class="left">毛坯 光圆Φ<span class="num">10mm</span>长<span class="num">646mm AISI304 </span>切断</td>
            <td>个</td><td><input type="checkbox" class="tick plain" aria-label="是否倒冲"></td><td class="num">1</td><td class="num">3.000%</td>
            <td class="num">3</td><td class="num">209</td><td class="num">216</td><td class="num">4.5%</td><td class="num">0.0%</td><td></td><td>系统开发者</td>
          </tr>
        </tbody>
      </table>
    </div>
  </section>
  <script src="script.js"></script>
</body>
</html>
```
FILE: styles.css
```css
* {
  box-sizing: border-box;
}
body {
  margin: 0;
  background-color: #000;
  color: #111;
  font-family: "Noto Sans", "Noto Sans CJK SC", sans-serif;
  font-size: 12px;
  line-height: 16px;
}
button, input, select {
  font: inherit;
  color: inherit;
  margin: 0;
  padding: 0;
  border: none;
  border-radius: 0;
  background: none;
  appearance: none;
  outline: none;
}
button {
  cursor: pointer;
  white-space: nowrap;
}
a {
  color: inherit;
  text-decoration: none;
}
h1, h2 {
  margin: 0;
  font-size: 12px;
  font-weight: normal;
}
.sprite {
  display: none;
}
.ico {
  width: 16px;
  height: 16px;
  flex: none;
  display: block;
}
.tri {
  width: 7px;
  height: 7px;
  flex: none;
  display: block;
  color: #111;
}

/* frame */
.screen {
  display: flex;
  flex-direction: column;
  height: 100vh;
  padding-left: 8px;
}
.titlebar {
  display: grid;
  grid-template-columns: 1fr auto 1fr;
  align-items: center;
  height: 28px;
  flex: none;
  padding: 0 10px 0 7px;
  background-color: #cfddd0;
}
.titlebar h1 {
  padding: 2px 0 0 28px;
  color: #666;
}
.quick {
  display: flex;
  align-items: center;
  gap: 7px;
}
.quick-sep {
  width: 1px;
  height: 20px;
  background-color: #a9b5aa;
}
.more {
  display: block;
  width: 8px;
  height: 8px;
  margin-left: 4px;
}
.win-ctl {
  display: flex;
  justify-content: flex-end;
  gap: 20px;
}
.win-ctl svg, .dlg-ctl svg {
  display: block;
  width: 10px;
  height: 10px;
}
.menubar {
  display: flex;
  align-items: center;
  height: 25px;
  flex: none;
  background-color: #cfddd0;
  border-bottom: 1px solid #777;
}
.file-btn {
  width: 22px;
  height: 25px;
  background-color: #06835f;
}
.menubar a {
  margin: 0 13px 0 15px;
}
.modules {
  display: flex;
  gap: 7px;
  margin-left: auto;
  padding-right: 3px;
}
.modules button {
  display: flex;
  align-items: center;
  gap: 2px;
}
.modules .tri {
  margin-left: 1px;
}
.shell {
  display: flex;
  flex: 1;
  min-height: 0;
}
.edge {
  width: 8px;
  background-color: #fff;
  display: flex;
  align-items: center;
}
.fold {
  width: 0;
  height: 0;
  border: 4px solid transparent;
}
.fold-right {
  border-left-color: #111;
  border-right: none;
  margin-left: 1px;
}
.fold-left {
  border-right-color: #111;
  border-left: none;
  margin-left: 2px;
}
.workspace {
  display: flex;
  flex-direction: column;
  flex: 1;
  min-width: 0;
  background-color: #cfddd0;
  border-left: 1px solid #8a9a8b;
  border-right: 1px solid #8a9a8b;
}

/* tabs */
.tabs {
  display: flex;
  gap: 4px;
  height: 27px;
  flex: none;
  padding: 2px 0 0 5px;
  background-color: #59795c;
  border-bottom: 2px solid #a9b9aa;
}
.tab {
  display: flex;
  align-items: center;
  gap: 8px;
  padding: 0 10px 0 7px;
  color: #fff;
}
.tab.active {
  background-color: #fff;
  color: #111;
}
.x {
  width: 9px;
  height: 9px;
  color: #111;
}

/* toolbars */
.toolbar {
  display: flex;
  align-items: center;
  gap: 11px;
  flex: none;
  height: 30px;
  padding-left: 5px;
  padding-bottom: 4px;
  border: 1px solid #afbfb0;
  color: #1e2e20;
}
.toolbar button {
  display: flex;
  align-items: center;
  gap: 8px;
}
.toolbar button:disabled {
  color: #a9a3a0;
}
.toolbar .sep {
  width: 1px;
  height: 17px;
  margin: 0 -3px;
  background-color: #a3b2a4;
}
.main-toolbar {
  border-top: none;
}

/* fields */
.field {
  display: flex;
  height: 25px;
  min-width: 0;
  border: 1px solid #8a9f8d;
  background-color: #fff;
}
.field input, .field select {
  flex: 1;
  width: 0;
  min-width: 0;
  padding: 0 1px 2px;
  color: #1e2e20;
}
.part {
  display: flex;
  align-items: center;
  justify-content: center;
  width: 18px;
  flex: none;
  border-left: 1px solid #8a9f8d;
  background-color: #cfddd0;
}
.dots {
  align-items: flex-end;
  line-height: 14px;
  color: #111;
}
.spin {
  display: flex;
  flex-direction: column;
  width: 18px;
  flex: none;
  border-left: 1px solid #8a9f8d;
  background-color: #cfddd0;
}
.spin button {
  flex: 1;
  display: flex;
  align-items: center;
  justify-content: center;
  min-height: 0;
}
.spin button + button {
  border-top: 1px solid #8a9f8d;
}
.tick {
  width: 13px;
  height: 13px;
  flex: none;
  border: 1px solid #8a9f8d;
  background-color: #d9e5da;
  display: flex;
  align-items: center;
  justify-content: center;
}
.tick:checked::before {
  content: "";
  width: 8px;
  height: 4px;
  border: solid #111;
  border-width: 0 0 2px 2px;
  margin-bottom: 3px;
  transform: rotate(-45deg);
}
.tick:disabled:checked::before {
  border-color: #a09a98;
}
.tick.plain {
  margin: 0 auto;
  border-color: #222;
  background-color: #fff;
}

/* filter tree */
.panes {
  display: flex;
  flex: 1;
  min-height: 0;
  padding-top: 4px;
}
.filter {
  display: flex;
  flex-direction: column;
  width: 249px;
  flex: none;
  padding: 0 1px 1px;
  border-right: 1px solid #a9b9aa;
}
.filter-head {
  height: 22px;
  flex: none;
  margin: 0 -1px;
  border: 1px solid #a9b9aa;
}
.filter-head span {
  display: block;
  width: 230px;
  padding: 2px 0 2px 4px;
  color: #2c372d;
  background-color: #b0bab1;
  clip-path: polygon(0 0, 100% 0, 209px 100%, 0 100%);
}
.filter-tools {
  display: flex;
  align-items: center;
  gap: 12px;
  height: 30px;
  flex: none;
  padding-left: 5px;
  border-bottom: 1px solid #afbfb0;
  color: #1e2e20;
}
.filter-tools button {
  display: flex;
  align-items: center;
  gap: 8px;
}
.filter-tools label {
  display: flex;
  align-items: center;
  gap: 4px;
}
.filter-tools label + label {
  margin-left: 3px;
}
.group-by {
  flex: none;
  margin-top: 1px;
}
.filter-find {
  display: flex;
  align-items: center;
  gap: 20px;
  height: 35px;
  flex: none;
  padding: 0 3px 2px 7px;
}
.filter-find .field {
  flex: 1;
}
.play {
  width: 8px;
  height: 14px;
}
.tree {
  flex: 1;
  margin: 0;
  padding: 2px 0 0 8px;
  list-style: none;
  background-color: #fff;
  border: 1px solid #868e95;
}
.tree li {
  position: relative;
  height: 20px;
  padding-left: 17px;
  line-height: 20px;
}
.tree li::before {
  content: "";
  position: absolute;
  left: 4px;
  top: 0;
  width: 10px;
  height: 100%;
  border-left: 1px dotted #999;
  background: repeating-linear-gradient(90deg, #aaa 0 1px, transparent 1px 2px) 0 10px / 100% 1px no-repeat;
}
.tree .leaf::before {
  top: 10px;
  height: 10px;
  background-position: 0 0;
}
.tree li:last-child::before {
  height: 11px;
}
.tree li::after {
  content: "";
  position: absolute;
  left: 0;
  top: 6px;
  width: 9px;
  height: 9px;
  border: 1px solid #8f98a4;
  background:
    linear-gradient(#3c5a98, #3c5a98) center / 5px 1px no-repeat,
    linear-gradient(#3c5a98, #3c5a98) center / 1px 5px no-repeat,
    #f4f6f8;
}
.tree .leaf::after {
  display: none;
}
.splitter {
  display: flex;
  align-items: center;
  width: 7px;
  flex: none;
  background-color: #fff;
}

/* records */
.records {
  display: flex;
  flex-direction: column;
  flex: 1;
  min-width: 0;
  padding-left: 4px;
}
.scheme {
  display: flex;
  align-items: center;
  height: 39px;
  flex: none;
  padding-left: 11px;
  color: #2b54a4;
}
.scheme .field {
  height: 21px;
}
.scheme label {
  padding-bottom: 7px;
}
.scheme-field {
  width: 175px;
  margin: 0 22px 6px 9px;
}
.find-label {
  width: 48px;
}
.find-field {
  width: 158px;
  margin-bottom: 10px;
}
.grid-box {
  position: relative;
  flex: 1;
  min-height: 0;
  border-top: 2px solid #6e706f;
  border-left: 1px solid #6e706f;
  border-bottom: 1px solid #fff;
  border-right: 1px solid #fff;
  background-color: #e5e6e9;
}
.grid {
  border-collapse: collapse;
  table-layout: fixed;
  width: 932px;
  font-family: "Noto Sans CJK SC", sans-serif;
  line-height: 16px;
  border-bottom: 2px solid #d5d7d3;
}
.grid th, .grid td {
  height: 20px;
  padding: 0 1px;
  border: solid #d3d6d2;
  border-width: 0 1px 1px 0;
  font-weight: normal;
  text-align: center;
  white-space: nowrap;
  overflow: hidden;
}
.grid th {
  height: 26px;
  background-color: #dae5db;
  color: #a9aba9;
}
.grid .key {
  background-color: #ffeecf;
  color: #1e2e20;
}
.grid .on {
  color: #111;
}
.grid td {
  background-color: #fff;
}
.grid tr:nth-child(odd) td {
  background-color: #f3f4f6;
}
.grid tr:nth-child(n) .no {
  background-color: #dae5db;
  color: #3d3a8c;
}
.grid tr:nth-child(n) .hot {
  background-color: #ffeecf;
}
.grid .num {
  font-family: "DejaVu Sans Mono", "Noto Sans CJK SC", monospace;
  font-size: 10px;
}
.grid span.num {
  white-space: pre;
}
.grid a {
  color: #4a90e2;
  text-decoration: underline;
}
.w35 { width: 35px; }
.w37 { width: 37px; }
.w38 { width: 38px; }
.w44 { width: 44px; }
.w45 { width: 45px; }
.w55 { width: 55px; }
.w57 { width: 57px; }
.w61 { width: 61px; }
.w62 { width: 62px; }
.w64 { width: 64px; }
.w65 { width: 65px; }
.w77 { width: 77px; }
.w83 { width: 83px; }
.w85 { width: 85px; }
.w89 { width: 89px; }
.w107 { width: 107px; }
.w112 { width: 112px; }
.w133 { width: 133px; }
.w324 { width: 324px; }
.mask {
  position: absolute;
  left: 722px;
  top: 610px;
  width: 76px;
  height: 220px;
  z-index: 3;
}
.pager {
  display: flex;
  align-items: center;
  gap: 5px;
  height: 28px;
  flex: none;
  margin-top: 2px;
  padding-left: 4px;
  border: 1px solid #a9b9aa;
}
.pager .field {
  height: 22px;
}
.pager .field input, .pager .field select {
  padding-left: 4px;
}
.pager button + button {
  margin-left: 3px;
}
.pager .spin button + button {
  margin-left: 0;
}
.pages {
  margin-right: 5px;
}
.pager label {
  margin: 0 2px 0 3px;
}
.page-field {
  width: 60px;
}
.size-field {
  width: 57px;
}

/* status + taskbar */
.status {
  display: flex;
  justify-content: space-between;
  align-items: center;
  height: 23px;
  flex: none;
  padding: 2px 7px 0 3px;
  background-color: #06835f;
  border-bottom: 1px solid #dfe8e2;
  color: #fff;
}
.taskbar {
  display: flex;
  height: 9px;
  flex: none;
  padding-left: 394px;
  background-color: #1c1c1c;
  overflow: hidden;
}
.task {
  width: 48px;
  margin-right: 50px;
  background-color: #454545;
}
.task-hot {
  background-color: #a85c24;
}
.clock {
  margin-left: auto;
  padding: 3px 28px 0 0;
  color: #fff;
}

/* dialog */
.dialog {
  position: absolute;
  left: 568px;
  top: 152px;
  width: 1105px;
  z-index: 2;
  background-color: #cfddd0;
  border: 1px solid #5c605d;
  border-width: 1px 2px 2px 1px;
  box-shadow: 0 6px 16px rgba(0, 0, 0, 0.35);
}
.dlg-title {
  display: flex;
  align-items: center;
  gap: 6px;
  height: 30px;
  padding-left: 8px;
  background-color: #fff;
}
.dlg-ctl {
  display: flex;
  gap: 36px;
  margin-left: auto;
  padding-right: 17px;
}
.ribbon {
  display: flex;
  gap: 1px;
  height: 50px;
  padding-top: 5px;
  border: 1px solid #afbfb0;
  color: #1e2e20;
}
.ribbon button {
  display: flex;
  flex-direction: column;
  align-items: center;
  gap: 4px;
  padding: 0 5px;
}
.ribbon .bar {
  width: 1px;
  height: 36px;
  margin: 0 2px;
  background-color: #a3b2a4;
}
.order {
  display: grid;
  grid-template-columns: 113px 156px 115px 156px 115px 156px 115px 156px;
  grid-auto-rows: 25px;
  row-gap: 6px;
  height: 207px;
  margin-top: 4px;
  padding-top: 3px;
  background-color: #fff;
  border: solid #5f6360;
  border-width: 1px 0;
  color: #2b54a4;
}
.order > label, .figure-label {
  align-self: center;
  padding-right: 10px;
  text-align: right;
}
.order .off {
  color: #adadad;
}
.order .must {
  color: #d6823c;
}
.order .field {
  background-color: #cfddd0;
}
.order .need {
  background-color: #fff6db;
}
.order .field input, .order .field select {
  padding-bottom: 4px;
  text-align: center;
  text-align-last: center;
}
.order .wide {
  grid-column: span 3;
}
.order .wide input {
  text-align: left;
  text-align-last: left;
}
.tick-cell {
  padding: 6px 0 0 4px;
}
.figure-label, .figure {
  grid-row: 5 / span 2;
}
.figure {
  width: 78px;
  margin: 3px 0;
  border-right: 2px solid #b4b4b4;
}
.sub-toolbar {
  height: 31px;
  margin-top: 3px;
}
.dlg-tabs {
  height: 28px;
}
.need-box {
  height: 260px;
  margin-left: 1px;
  margin-right: 1px;
  border-top: 2px solid #6e706f;
  border-left: 1px solid #6e706f;
  border-right: 1px solid #fff;
  border-bottom: 1px solid #fff;
  background-color: #e5e6e9;
}
.need-grid {
  width: 1098px;
}
.need-grid th {
  height: 32px;
  line-height: 13px;
}
.grid .left {
  padding-left: 3px;
  text-align: left;
}
.need-grid tr:nth-child(n) .hot.no {
  color: #a9aba9;
}
.grid .lock-cell {
  padding-left: 2px;
  text-align: left;
}
.padlock {
  width: 7px;
  height: 9px;
}
```
FILE: script.js
```js
// name, number, action, then item / qty / ... / time for the rows that have them
const records = [
  ['生产发料单', 'SC00036', '审核'],
  ['生产发料单', 'SC00035', '审核'],
  ['生产发料单', 'SC00034', '审核'],
  ['生产发料单', 'SC00033', '审核'],
  ['采购收货明细单', 'SM000028', '审核'],
  ['采购收货明细单', 'SM000027', '审核'],
  ['采购收货明细单', 'SM000026', '审核'],
  ['采购收货明细单', 'SM000025', '审核'],
  ['生产发料单', 'SC00042', '审核'],
  ['生产发料单', 'SC00044', '审核'],
  ['生产发料单', 'SC00043', '审核'],
  ['销售发货明细单', 'FM000023', '审核'],
  ['采购收货明细单', 'SM000024', '审核'],
  ['生产收货单', 'SC00024', '审核'],
  ['采购明细订单', 'CM000034', '完成'],
  ['采购明细订单', 'CM000025', '完成'],
  ['采购明细订单', 'CM000021', '完成'],
  ['采购明细订单', 'CM000019', '完成'],
  ['生产收货单', 'SC00024', '审核'],
  ['采购明细订单', 'CM000040', '审核'],
  ['生产发料单', 'SC00044', '审核'],
  ['生产发料单', 'SC00043', '审核'],
  ['生产订单', 'SC00044', '审核'],
  ['生产订单', 'SC00044', '审核'],
  ['生产订单', 'SC00043', '审核'],
  ['生产订单', 'SC00043', '审核'],
  ['生产发料单', 'SC00041', '审核'],
  ['生产发料单', 'SC00040', '审核'],
  ['生产发料单', 'SC00037', '审核'],
  ['采购收货明细单', 'SM000021', '审核', '2.42.099', '1064', '', '', '-1064', '', '', '', '2023-04-23 14:27:29'],
  ['采购收货明细单', 'SM000022', '审核', '2.1.105', '108', '', '', '-108', '', '', '', '2023-04-23 14:27:29'],
  ['采购收货明细单', 'SM000023', '审核', '2.1.104', '108', '', '', '-108', '', '', '', '2023-04-23 14:27:29'],
  ['采购收货明细单', 'SM000020', '审核', '2.42.098', '2002', '', '', '-2002', '', '', '', '2023-04-23 14:27:29'],
  ['期初物料表', '', '审核', '9.7.164', '1', '', '', '', '', '', '', '2023-04-21 19:32:50'],
  ['期初物料表', '', '审核', '9.7.163', '1', '', '', '', '', '', '', '2023-04-21 19:32:49'],
  ['期初物料表', '', '审核', '9.7.162', '1', '', '', '', '', '', '', '2023-04-21 19:32:47'],
  ['期初物料表', '', '审核', '9.7.161', '1', '', '', '', '', '', '', '2023-04-21 19:32:45'],
  ['期初物料表', '', '审核', '9.7.013', '1', '', '', '', '', '', '', '2023-04-21 19:32:43'],
  ['销售发货明细单', 'FM000018', '审核', '3.6.002', '-587', '', '-587', '', '', '', '', '2023-04-21 17:43:05'],
  ['销售发货明细单', 'FM000019', '审核', '3.6.003', '-626', '', '-626', '', '', '', '', '2023-04-21 17:43:05']
];
const current = 3;
const body = document.querySelector('#rows');

records.forEach((record, i) => {
  const row = document.createElement('tr');
  const no = row.insertCell();
  no.className = i + 1 === current ? 'no hot num' : 'no num';
  no.textContent = i + 1;

  for (let c = 0; c < 12; c++) {
    const cell = row.insertCell();
    const text = record[c] || '';
    if (c === 1 && text) {
      const link = document.createElement('a');
      link.href = '#' + text;
      link.textContent = text;
      cell.appendChild(link);
    } else {
      cell.textContent = text;
    }
    if (c !== 0 && c !== 2) {
      cell.className = 'num';
    }
  }
  body.appendChild(row);
});
```
